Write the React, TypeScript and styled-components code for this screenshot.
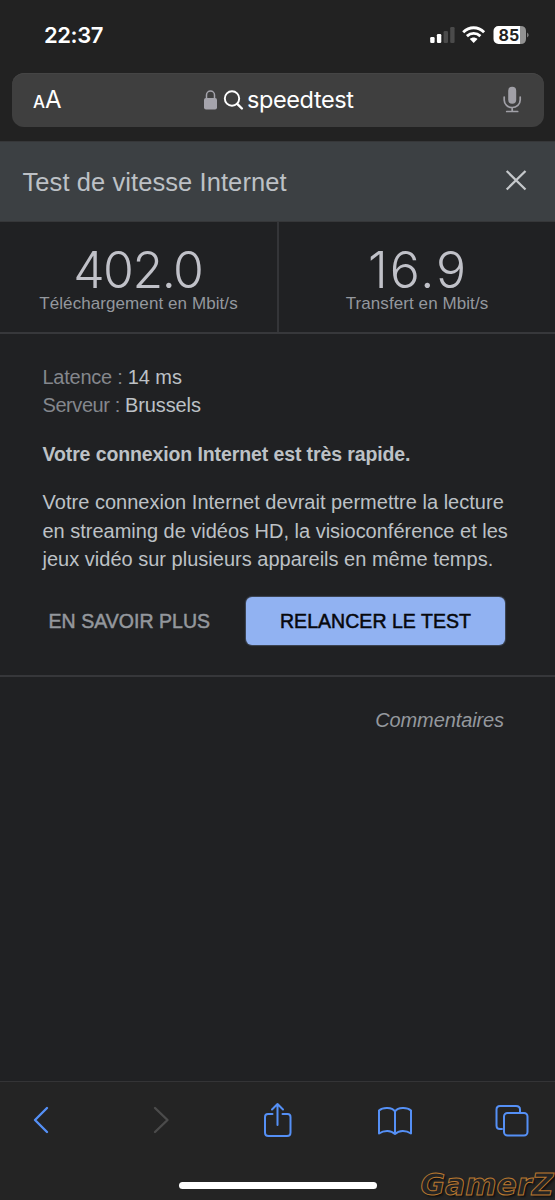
import React from "react";
import styled, { createGlobalStyle } from "styled-components";

const GlobalStyle = createGlobalStyle`
  * { box-sizing: border-box; }
  body { margin: 0; background: #202124; }
`;

const sans = `"Liberation Sans", Arial, sans-serif`;
const system = `Inter, "Liberation Sans", sans-serif`;

const Phone = styled.div`
  width: 555px;
  height: 1200px;
  display: flex;
  flex-direction: column;
  overflow: hidden;
  background: #202123;
  color: #bdc1c6;
  font-family: ${sans};
`;

const BrowserTop = styled.div`
  height: 141px;
  flex: none;
  padding: 0 11.5px;
  background: #222222;
`;

const StatusBar = styled.div`
  height: 72.5px;
  padding: 0 15px 2px 32.5px;
  display: flex;
  align-items: center;
  justify-content: space-between;
  color: #fff;
`;

const Clock = styled.span`
  font: 600 22px/26px ${system};
  letter-spacing: -0.4px;
`;

const StatusIcons = styled.div`
  display: flex;
  align-items: center;
`;

const SearchBar = styled.div`
  height: 54.5px;
  border-radius: 12px;
  background: #3f3f3f;
  box-shadow: inset 0 1px #454545;
  display: grid;
  grid-template-columns: 100px 1fr 100px;
  align-items: center;
  padding: 0 20px 0 21.5px;
  color: #fff;
`;

const TextSize = styled.span`
  font: 400 24px/30px ${system};
  padding-top: 3px;
`;

const SmallA = styled.span`
  font-size: 17px;
  font-weight: 500;
`;

const Query = styled.div`
  display: flex;
  align-items: center;
  justify-content: center;
  font: 400 23.5px/30px ${system};
`;

const QueryText = styled.span`
  letter-spacing: -0.4px;
  margin-left: 3px;
  padding-top: 1px;
`;

const Mic = styled.div`
  display: flex;
  justify-content: flex-end;
`;

const PanelHeader = styled.header`
  height: 81px;
  flex: none;
  padding: 1px 27px 0 22.5px;
  display: flex;
  align-items: center;
  justify-content: space-between;
  background: #3c4043;
  border-top: 1px solid #363739;
  border-bottom: 1px solid #363739;
`;

const Title = styled.h1`
  margin: 0;
  font-size: 25.5px;
  line-height: 30px;
  font-weight: 400;
  letter-spacing: 0.08px;
`;

const Results = styled.div`
  height: 112px;
  flex: none;
  display: grid;
  grid-template-columns: 277px 278px;
  border-bottom: 2px solid #37383b;
`;

const Result = styled.div<{ $divided?: boolean }>`
  padding-top: 23px;
  text-align: center;
  border-left: ${(p) => (p.$divided ? "2px solid #343538" : "none")};
`;

const Value = styled.div<{ $spacing: number }>`
  font: 300 50px/50px ${system};
  letter-spacing: ${(p) => p.$spacing}px;
  text-indent: ${(p) => p.$spacing}px;
  color: #c0c1c8;
`;

const Unit = styled.div`
  font-size: 17px;
  line-height: 17px;
  letter-spacing: 0.08px;
  color: #94989e;
`;

const Details = styled.section`
  height: 343px;
  flex: none;
  padding: 29px 42px 0 42.5px;
  border-bottom: 2px solid #36373a;
  font-size: 20px;
  line-height: 28.4px;
`;

const Fact = styled.div`
  letter-spacing: -0.1px;
`;

const FactLabel = styled.span<{ $spacing: number }>`
  color: #84878d;
  letter-spacing: ${(p) => p.$spacing}px;
`;

const Verdict = styled.div`
  margin-top: 20px;
  font-weight: 700;
  font-size: 19.5px;
  letter-spacing: -0.11px;
`;

const Explanation = styled.p`
  margin: 20px 0 0;
  white-space: nowrap;
`;

const Line = styled.span<{ $spacing: number }>`
  display: block;
  letter-spacing: ${(p) => p.$spacing}px;
`;

const Actions = styled.div`
  display: flex;
  align-items: center;
  justify-content: space-between;
  margin: 23.4px 8px 0 6px;
`;

const LinkButton = styled.button`
  border: 0;
  padding: 0;
  background: none;
  color: #94989d;
  font: 400 19.5px/24px ${sans};
  -webkit-text-stroke: 0.5px currentColor;
  letter-spacing: 0.04px;
  white-space: nowrap;
`;

const PrimaryButton = styled(LinkButton)`
  width: 259px;
  height: 48px;
  border-radius: 6px;
  background: #91b2f2;
  color: #07080c;
  box-shadow: 0 0 1px 1px #3f4858;
`;

const Feedback = styled.div`
  flex: 1;
  padding: 31px 51px 0 0;
  text-align: right;
  font-size: 20px;
  line-height: 24px;
  letter-spacing: -0.1px;
  font-style: italic;
  color: #94989d;
`;

const BottomBar = styled.footer`
  position: relative;
  height: 119px;
  flex: none;
  border-top: 1px solid #343436;
  background: #242424;
`;

const Tools = styled.nav`
  display: flex;
  justify-content: space-between;
  padding: 19px 25px 0 24px;
`;

const HomeIndicator = styled.div`
  width: 198px;
  height: 7px;
  margin: 44.5px auto 0;
  border-radius: 4px;
  background: #fff;
`;

const Watermark = styled.div`
  position: absolute;
  right: 1.5px;
  bottom: 0;
  font: italic 700 30px/31px "DejaVu Sans", sans-serif;
  color: #242424;
  -webkit-text-stroke: 1px #b87830;
  text-shadow: 2px 2px 2px #111;
`;

const Tool = ({ children, color = "#5590f6" }: { children: React.ReactNode; color?: string }) => (
  <svg width="36" height="36" viewBox="0 0 36 36" fill="none" stroke={color} strokeWidth="2" strokeLinecap="round" strokeLinejoin="round">
    {children}
  </svg>
);

export default function App() {
  return (
    <Phone>
      <GlobalStyle />
      <BrowserTop>
        <StatusBar>
          <Clock>22:37</Clock>
          <StatusIcons>
            <svg width="100" height="22" viewBox="0 0 100 22">
              <rect x="1.2" y="13" width="4.4" height="6" rx="1.2" fill="#fff" />
              <rect x="7.9" y="10" width="4.4" height="9" rx="1.2" fill="#fff" />
              <rect x="14.6" y="7" width="4.4" height="12" rx="1.2" fill="#4b4b4b" />
              <rect x="21.2" y="3" width="4.4" height="16" rx="1.2" fill="#4b4b4b" />
              <g fill="none" stroke="#fff" strokeWidth="2.9">
                <path d="M34.2 8.2C40.3 2.300 49 2.300 55.100 8.200" />
                <path d="M37.900 12.100C41.900 8.400 47.400 8.400 51.400 12.100" />
              </g>
              <path d="M40.800 15.100C43 13.100 46.300 13.100 48.500 15.100L44.650 19.100Z" fill="#fff" />
              <path d="M69.500 2H91.500V20H69.500A5 5 0 0 1 64.500 15V7A5 5 0 0 1 69.500 2Z" fill="#fff" />
              <path d="M91.500 2Q97 2 97 7V15Q97 20 91.500 20Z" fill="#929292" />
              <path d="M98.200 8.500Q101 11 98.200 13.500Z" fill="#929292" />
              <text x="79.800" y="16.800" textAnchor="middle" fontFamily="Inter" fontWeight="700" fontSize="16" fill="#222">85</text>
            </svg>
          </StatusIcons>
        </StatusBar>
        <SearchBar>
          <TextSize><SmallA>A</SmallA>A</TextSize>
          <Query>
            <svg width="41" height="24" viewBox="0 0 41 24" fill="none">
              <rect x="1" y="10" width="13" height="11.500" rx="2" fill="#a5a4ac" />
              <path d="M3.500 11V7a4 4 0 0 1 8 0v4" stroke="#a5a4ac" strokeWidth="1.500" />
              <circle cx="29" cy="10.500" r="7.200" stroke="#fff" strokeWidth="1.900" />
              <path d="M34.200 15.800L38.900 20.500" stroke="#fff" strokeWidth="2.400" strokeLinecap="round" />
            </svg>
            <QueryText>speedtest</QueryText>
          </Query>
          <Mic>
            <svg width="22" height="28" viewBox="0 0 22 28" fill="none" stroke="#a1a0a7" strokeWidth="1.700" strokeLinecap="round">
              <rect x="6.200" y="0.800" width="8" height="17" rx="4" fill="#a1a0a7" stroke="none" />
              <path d="M2.200 11v3a8 7.500 0 0 0 16 0v-3M10.200 21.500v4M4.700 25.500h11" />
            </svg>
          </Mic>
        </SearchBar>
      </BrowserTop>
      <PanelHeader>
        <Title>Test de vitesse Internet</Title>
        <svg width="23" height="27" viewBox="0 0 23 27" stroke="#c5c8cb" strokeWidth="2.300">
          <path d="M1.700 2L20.500 20.500M20.500 2L1.700 20.500" />
        </svg>
      </PanelHeader>
      <Results>
        <Result>
          <Value $spacing={-1.5}>402.0</Value>
          <Unit>Téléchargement en Mbit/s</Unit>
        </Result>
        <Result $divided>
          <Value $spacing={2.1}>16.9</Value>
          <Unit>Transfert en Mbit/s</Unit>
        </Result>
      </Results>
      <Details>
        <Fact><FactLabel $spacing={-0.25}>Latence : </FactLabel>14 ms</Fact>
        <Fact><FactLabel $spacing={-0.43}>Serveur : </FactLabel>Brussels</Fact>
        <Verdict>Votre connexion Internet est très rapide.</Verdict>
        <Explanation>
          <Line $spacing={0.02}>Votre connexion Internet devrait permettre la lecture</Line>
          <Line $spacing={-0.01}>en streaming de vidéos HD, la visioconférence et les</Line>
          <Line $spacing={0.01}>jeux vidéo sur plusieurs appareils en même temps.</Line>
        </Explanation>
        <Actions>
          <LinkButton>EN SAVOIR PLUS</LinkButton>
          <PrimaryButton>RELANCER LE TEST</PrimaryButton>
        </Actions>
      </Details>
      <Feedback>Commentaires</Feedback>
      <BottomBar>
        <Tools>
          <Tool><path d="M23 7L11 19L23 31" strokeWidth="2.400" /></Tool>
          <Tool color="#4b4b4b"><path d="M13 7L25.500 19L13 31" strokeWidth="2.400" /></Tool>
          <Tool>
            <path d="M13.500 13H9Q6 13 6 16V31.500Q6 35 9.500 35H28Q31.500 35 31.500 31.500V16Q31.500 13 28.500 13H23.500" />
            <path d="M18.500 24V3M13 8.500L18.500 3L24 8.500" />
          </Tool>
          <Tool>
            <path d="M18 10.500C15 6 6 6 2 9.500V32.500C7 29 14 29 18 33C22 29 29 29 34 32.500V9.500C30 6 21 6 18 10.500V33" />
          </Tool>
          <Tool>
            <path d="M8 28H6Q2.500 28 2.500 24.500V8.500Q2.500 5 6 5H22Q26 5 26 8.500V11.500" />
            <rect x="10" y="12" width="23.500" height="22.500" rx="3.500" />
          </Tool>
        </Tools>
        <HomeIndicator />
        <Watermark>GamerZ</Watermark>
      </BottomBar>
    </Phone>
  );
}
